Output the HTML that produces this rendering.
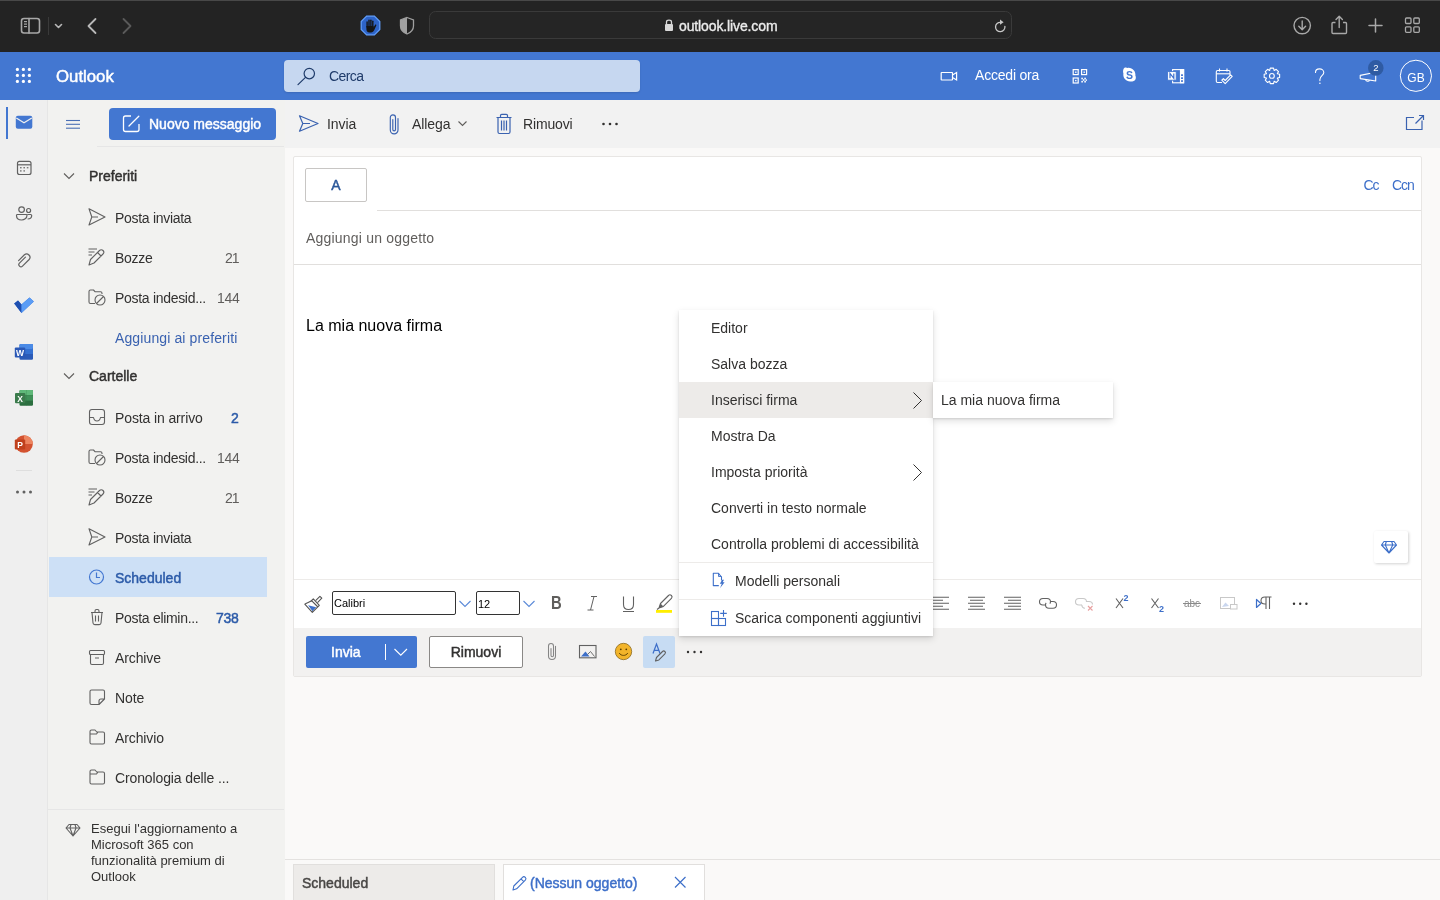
<!DOCTYPE html>
<html><head><meta charset="utf-8">
<style>
*{box-sizing:border-box;margin:0;padding:0}
html,body{width:1440px;height:900px;overflow:hidden;will-change:transform;background:#faf9f8;font-family:"Liberation Sans",sans-serif;color:#323130}
.a{position:absolute}
.sb{-webkit-text-stroke:0.45px currentColor}
svg{position:absolute;overflow:visible}
.t{position:absolute;white-space:nowrap;font-size:14px;line-height:16px}
#safari{left:0;top:0;width:1440px;height:52px;background:#232323;border-top:1px solid #484848}
#hdr{left:0;top:52px;width:1440px;height:48px;background:#4377d1}
#rail{left:0;top:100px;width:48px;height:800px;background:#efefef;border-right:1px solid #e6e6e6}
#pane{left:48px;top:100px;width:237px;height:800px;background:#f2f2f0}
#cmd{left:285px;top:100px;width:1155px;height:48px;background:#f2f2f2}
.fi{position:absolute;left:88px;font-size:14px;line-height:16px;color:#323130;white-space:nowrap}
.cnt{position:absolute;right:46px;font-size:14px;color:#605e5c}
.mi{position:absolute;left:0;width:254px;height:36px}
.mi span{position:absolute;left:32px;top:10px;font-size:14px;line-height:16px;color:#323130;white-space:nowrap}
</style></head><body>
<!-- Safari toolbar -->
<div id="safari" class="a"></div>
<svg style="left:0;top:0" width="1440" height="52">
 <g fill="none" stroke="#a8a8a8" stroke-width="1.6" stroke-linecap="round" stroke-linejoin="round">
  <rect x="21.5" y="18.5" width="18" height="14.5" rx="2.5"/>
  <line x1="29" y1="18.5" x2="29" y2="33"/>
 </g>
 <g fill="#a8a8a8"><rect x="24" y="21" width="3" height="1.2"/><rect x="24" y="23.5" width="3" height="1.2"/><rect x="24" y="26" width="3" height="1.2"/></g>
 <line x1="48.5" y1="17" x2="48.5" y2="35" stroke="#3a3a3a" stroke-width="1"/>
 <path d="M55.5 24.5 L58.5 27.5 L61.5 24.5" fill="none" stroke="#b8b8b8" stroke-width="1.6" stroke-linecap="round" stroke-linejoin="round"/>
 <path d="M95.5 19 L88.5 26 L95.5 33" fill="none" stroke="#b8b8b8" stroke-width="1.8" stroke-linecap="round" stroke-linejoin="round"/>
 <path d="M123.5 19 L130.5 26 L123.5 33" fill="none" stroke="#5a5a5a" stroke-width="1.8" stroke-linecap="round" stroke-linejoin="round"/>
 <!-- adblock octagon -->
 <polygon points="366.6,16.2 374.4,16.2 379.8,21.6 379.8,29.4 374.4,34.8 366.6,34.8 361.2,29.4 361.2,21.6" fill="#2e64c8" stroke="#62a0ff" stroke-width="1.2"/>
 <g fill="#151515">
  <rect x="366.4" y="21.2" width="1.4" height="6.5" rx="0.7"/>
  <rect x="368.3" y="19.4" width="1.4" height="8" rx="0.7"/>
  <rect x="370.2" y="19.6" width="1.4" height="8" rx="0.7"/>
  <rect x="372.1" y="20.6" width="1.4" height="7" rx="0.7"/>
  <path d="M366.4 26 L373.5 26 L373.5 27.5 L375 25 C375.4 24.3 376.6 24.6 376.3 25.5 L374.3 30 C373.6 31.6 372.5 32.4 371 32.4 L369.2 32.4 C367.5 32.4 366.4 31 366.4 29.2 Z"/>
 </g>
 <!-- shield -->
 <path d="M407 17.5 L413.5 20 L413.5 26 C413.5 30 410.5 32.5 407 34 C403.5 32.5 400.5 30 400.5 26 L400.5 20 Z" fill="none" stroke="#a0a0a0" stroke-width="1.3"/>
 <path d="M407 17.5 L400.5 20 L400.5 26 C400.5 30 403.5 32.5 407 34 Z" fill="#a0a0a0"/>
 <!-- url box -->
 <rect x="429.5" y="11.5" width="582" height="27" rx="6" fill="#252525" stroke="#3a3a3a" stroke-width="1"/>
 <rect x="665" y="24" width="8" height="7" rx="1" fill="#d8d8d8"/>
 <path d="M666.5 24 L666.5 22 C666.5 19.6 671.5 19.6 671.5 22 L671.5 24" fill="none" stroke="#d8d8d8" stroke-width="1.3"/>
 <path d="M1000.6 22.3 A4.7 4.7 0 1 0 1004.9 26.3" fill="none" stroke="#c8c8c8" stroke-width="1.3" stroke-linecap="round"/>
 <path d="M1000 19.6 L1003.6 22.2 L1000 24.8 Z" fill="#c8c8c8"/>
 <!-- right icons -->
 <circle cx="1302.2" cy="25.6" r="8.2" fill="none" stroke="#a8a8a8" stroke-width="1.4"/>
 <path d="M1302.2 21 L1302.2 29.5 M1298.8 26.3 L1302.2 29.7 L1305.6 26.3" fill="none" stroke="#a8a8a8" stroke-width="1.4" stroke-linecap="round" stroke-linejoin="round"/>
 <path d="M1335.5 22.5 L1333 22.5 C1332.5 22.5 1332 23 1332 23.5 L1332 32.5 C1332 33 1332.5 33.5 1333 33.5 L1345.5 33.5 C1346 33.5 1346.5 33 1346.5 32.5 L1346.5 23.5 C1346.5 23 1346 22.5 1345.5 22.5 L1343 22.5" fill="none" stroke="#a8a8a8" stroke-width="1.4"/>
 <path d="M1339.2 27.5 L1339.2 16.5 M1336 19.5 L1339.2 16.2 L1342.4 19.5" fill="none" stroke="#a8a8a8" stroke-width="1.4" stroke-linecap="round" stroke-linejoin="round"/>
 <path d="M1375.5 19 L1375.5 32 M1369 25.5 L1382 25.5" stroke="#a8a8a8" stroke-width="1.5" stroke-linecap="round"/>
 <g fill="none" stroke="#a8a8a8" stroke-width="1.3"><rect x="1405.5" y="18" width="5.5" height="5.5" rx="1"/><rect x="1413.8" y="18" width="5.5" height="5.5" rx="1"/><rect x="1405.5" y="26.8" width="5.5" height="5.5" rx="1"/><rect x="1413.8" y="26.8" width="5.5" height="5.5" rx="1"/></g>
</svg>
<div class="t" style="left:679px;top:18px;font-size:14px;color:#ececec;letter-spacing:-0.12px;-webkit-text-stroke:0.35px #ececec">outlook.live.com</div>
<div id="hdr" class="a"></div>
<svg style="left:0;top:52px" width="1440" height="48">
 <g fill="#fff">
  <circle cx="17.4" cy="17.4" r="1.6"/><circle cx="23.4" cy="17.4" r="1.6"/><circle cx="29.4" cy="17.4" r="1.6"/>
  <circle cx="17.4" cy="23.4" r="1.6"/><circle cx="23.4" cy="23.4" r="1.6"/><circle cx="29.4" cy="23.4" r="1.6"/>
  <circle cx="17.4" cy="29.4" r="1.6"/><circle cx="23.4" cy="29.4" r="1.6"/><circle cx="29.4" cy="29.4" r="1.6"/>
 </g>
</svg>
<div class="t sb" style="left:56px;top:68px;font-size:16.8px;line-height:18px;color:#fff">Outlook</div>
<div class="a" style="left:284px;top:60px;width:356px;height:32px;background:#c6d7f0;border-radius:4px;box-shadow:0 1px 2px rgba(0,0,0,0.12)"></div>
<svg style="left:0;top:52px" width="1440" height="48">
 <circle cx="309.3" cy="21.6" r="5.2" fill="none" stroke="#1f3b6a" stroke-width="1.2"/>
 <line x1="305.5" y1="25.4" x2="298" y2="32.6" stroke="#1f3b6a" stroke-width="1.2" stroke-linecap="round"/>
 <!-- video -->
 <g fill="none" stroke="#fff" stroke-width="1.2">
  <rect x="941.2" y="20.5" width="11.3" height="7.5" rx="0.5"/>
  <path d="M952.5 23 L956.6 20.6 L956.6 27.9 L952.5 25.5"/>
 </g>
 <!-- qr -->
 <g fill="none" stroke="#fff" stroke-width="1.2">
  <rect x="1073.2" y="17.6" width="5" height="5"/><rect x="1081.6" y="17.6" width="5" height="5"/><rect x="1073.2" y="26" width="5" height="5"/>
 </g>
 <g fill="#fff"><rect x="1075.1" y="19.5" width="1.4" height="1.4"/><rect x="1083.5" y="19.5" width="1.4" height="1.4"/><rect x="1075.1" y="27.9" width="1.4" height="1.4"/>
  <rect x="1081.3" y="25.7" width="1.6" height="1.6"/><rect x="1084.3" y="25.7" width="1.6" height="1.6"/><rect x="1082.8" y="27.2" width="1.6" height="1.6"/><rect x="1085.6" y="27.4" width="1.4" height="1.4"/><rect x="1081.3" y="28.9" width="1.6" height="1.6"/><rect x="1084.3" y="28.9" width="1.6" height="1.6"/>
 </g>
 <!-- skype -->
 <path d="M1124.5 15.7 C1125.5 15.2 1126.6 15.3 1127.6 15.9 C1132.2 15.3 1136 19.2 1135.4 23.8 C1136 24.9 1136 26.2 1135.5 27.3 C1134.8 28.9 1133 29.8 1131.3 29.4 C1126.6 30.2 1122.6 26.2 1123.4 21.5 C1122.7 19.6 1123.1 16.6 1124.5 15.7 Z" fill="#fff"/>
 <text x="1129.4" y="26.7" font-family="Liberation Sans" font-weight="bold" font-size="10.5" fill="#4377d1" text-anchor="middle">S</text>
 <!-- onenote -->
 <rect x="1172.6" y="17.6" width="11" height="13.2" fill="none" stroke="#fff" stroke-width="1.1"/>
 <rect x="1179.9" y="17.1" width="4.3" height="14.2" fill="#fff"/>
 <g fill="#3a6fd0"><rect x="1181.1" y="22.3" width="1.8" height="1.7"/><rect x="1181.1" y="25.3" width="1.8" height="1.7"/><rect x="1181.1" y="28.2" width="1.8" height="1.7"/></g>
 <rect x="1167.6" y="19.6" width="8.6" height="8.6" fill="#fff" stroke="#4377d1" stroke-width="0.9"/>
 <path d="M1170 26.3 L1170 21.4 L1173.8 26.3 L1173.8 21.4" fill="none" stroke="#3a6fd0" stroke-width="1.2"/>
 <!-- calendar check -->
 <g fill="none" stroke="#fff" stroke-width="1.1" stroke-linejoin="round">
  <path d="M1222 30.5 L1217.5 30.5 C1216.8 30.5 1216.3 30 1216.3 29.3 L1216.3 19.7 C1216.3 19 1216.8 18.5 1217.5 18.5 L1228.8 18.5 C1229.5 18.5 1230 19 1230 19.7 L1230 23"/>
  <line x1="1216.3" y1="21.8" x2="1230" y2="21.8"/>
  <line x1="1219.5" y1="16.5" x2="1219.5" y2="19.5"/><line x1="1227" y1="16.5" x2="1227" y2="19.5"/>
 </g>
 <path d="M1221.8 28.2 L1225.2 31.6 L1232.2 24.4 L1230.6 22.9 L1225.2 28.5 L1223.4 26.6 Z" fill="none" stroke="#fff" stroke-width="1.1" stroke-linejoin="round"/>
 <!-- gear -->
 <g transform="translate(1271.9,23.9)">
  <path d="M5.47 -2.21 L7.73 -1.64 L7.73 1.64 L5.47 2.21 L5.43 2.31 L6.63 4.30 L4.30 6.63 L2.31 5.43 L2.21 5.47 L1.64 7.73 L-1.64 7.73 L-2.21 5.47 L-2.31 5.43 L-4.30 6.63 L-6.63 4.30 L-5.43 2.31 L-5.47 2.21 L-7.73 1.64 L-7.73 -1.64 L-5.47 -2.21 L-5.43 -2.31 L-6.63 -4.30 L-4.30 -6.63 L-2.31 -5.43 L-2.21 -5.47 L-1.64 -7.73 L1.64 -7.73 L2.21 -5.47 L2.31 -5.43 L4.30 -6.63 L6.63 -4.30 L5.43 -2.31 Z" fill="none" stroke="#fff" stroke-width="1.1" stroke-linejoin="round"/>
  <circle r="2.4" fill="none" stroke="#fff" stroke-width="1.1"/>
 </g>
 <!-- help -->
 <path d="M1315.5 20.5 C1315.5 17.8 1317.4 16.9 1319.5 16.9 C1321.8 16.9 1323.8 18.4 1323.8 20.6 C1323.8 23.5 1319.9 24 1319.9 27.4 L1319.9 28.6" fill="none" stroke="#fff" stroke-width="1.1" stroke-linecap="round"/>
 <circle cx="1319.9" cy="31.3" r="0.8" fill="#fff"/>
 <!-- megaphone -->
 <g fill="none" stroke="#fff" stroke-width="1.1" stroke-linejoin="round">
  <path d="M1360.2 23.4 L1375.7 20.3 L1375.7 29 L1360.2 26.6 Z"/>
  <path d="M1365.6 27.5 C1365.6 29.6 1369 29.9 1369.5 28.2"/>
 </g>
 <circle cx="1375.8" cy="15.9" r="7.8" fill="#2f5ba3"/>
 <text x="1375.8" y="19.3" font-family="Liberation Sans" font-size="9.5" fill="#fff" text-anchor="middle">2</text>
 <circle cx="1415.9" cy="23.8" r="15.6" fill="none" stroke="#fff" stroke-width="1"/>
</svg>
<div class="t" style="left:329px;top:68px;color:#1f3b6a;letter-spacing:-0.6px">Cerca</div>
<div class="t" style="left:975px;top:67px;color:#fff;letter-spacing:-0.2px">Accedi ora</div>
<div class="t" style="left:1400px;top:71px;width:32px;text-align:center;color:#fff;font-size:12px;line-height:14px;letter-spacing:0px">GB</div>
<div id="rail" class="a"></div>
<svg style="left:0;top:100px" width="48" height="800">
 <rect x="6" y="7" width="2" height="32" fill="#4377d1"/>
 <!-- mail filled -->
 <rect x="15.8" y="15.8" width="16.5" height="13" rx="2" fill="#4377d1"/>
 <path d="M16.3 18 L24 22.8 L31.8 18" fill="none" stroke="#efefef" stroke-width="1.2"/>
 <!-- calendar -->
 <g fill="none" stroke="#616161" stroke-width="1.2"><rect x="17.5" y="61.3" width="13.5" height="13.2" rx="2"/><line x1="17.5" y1="64.8" x2="31" y2="64.8"/></g>
 <g fill="#7a7a7a"><rect x="20" y="67" width="1.6" height="1.4"/><rect x="23.4" y="67" width="1.6" height="1.4"/><rect x="26.8" y="67" width="1.6" height="1.4"/><rect x="20" y="70.2" width="1.6" height="1.4"/><rect x="23.4" y="70.2" width="1.6" height="1.4"/></g>
 <!-- people -->
 <g fill="none" stroke="#616161" stroke-width="1.2">
  <circle cx="21.6" cy="109.6" r="2.8"/><circle cx="28.6" cy="110.5" r="2"/>
  <path d="M17 114.5 L26.3 114.5 C26.8 114.5 27 114.8 27 115.3 C27 118.5 24 120 21.7 120 C19 120 16.5 118.5 16.5 115.5 C16.5 114.9 16.7 114.5 17 114.5 Z"/>
  <path d="M27.3 114.5 L30.6 114.5 C31.3 114.5 31.7 114.9 31.7 115.5 C31.7 117.8 29.8 119 27.6 119"/>
 </g>
 <!-- clip -->
 <path d="M18.60 160.57 L24.40 154.77 A3.36 3.36 0 0 1 29.13 159.51 L22.49 166.15 A2.15 2.15 0 0 1 19.45 163.11 L25.46 157.10" fill="none" stroke="#616161" stroke-width="1.2" stroke-linecap="round"/>
 <!-- todo -->
 <path d="M14.2 203.5 L18 200.5 L21.5 204.5 L29.5 197.5 L33.8 201.5 L21.5 213 Z" fill="#2f6bd6"/>
 <path d="M21.5 213 L14.2 203.5 L18 200.5 L21.5 204.5 Z" fill="#1e4fb0"/>
 <path d="M21.5 204.5 L29.5 197.5 L33.8 201.5 L21.5 213 Z" fill="#5a9cf5"/>
 <!-- word -->
 <rect x="19.5" y="244" width="13.5" height="15.8" rx="1.2" fill="#2b5bb8"/>
 <rect x="19.5" y="244" width="13.5" height="5" rx="1" fill="#4a8ae6"/>
 <rect x="19.5" y="249" width="13.5" height="5" fill="#3571d2"/>
 <rect x="14.8" y="247.5" width="10.4" height="10" rx="1" fill="#2a58b6"/>
 <text x="20" y="256" font-family="Liberation Sans" font-weight="bold" font-size="8.5" fill="#fff" text-anchor="middle">W</text>
 <!-- excel -->
 <rect x="19.5" y="290" width="13.5" height="15.8" rx="1.2" fill="#2b6e3f"/>
 <rect x="19.5" y="290" width="13.5" height="5.3" rx="1" fill="#5fb879"/>
 <rect x="19.5" y="295.3" width="13.5" height="5.3" fill="#3f9058"/>
 <line x1="26.3" y1="290" x2="26.3" y2="305.8" stroke="#2f7a47" stroke-width="0.6" opacity="0.5"/>
 <rect x="15" y="293" width="10.4" height="10.2" rx="1" fill="#3b7b4c"/>
 <text x="20.2" y="301.6" font-family="Liberation Sans" font-weight="bold" font-size="8.5" fill="#fff" text-anchor="middle">X</text>
 <!-- ppt -->
 <circle cx="24" cy="344" r="8.8" fill="#d35230"/>
 <path d="M24 344 L24 335.2 A8.8 8.8 0 0 1 32.8 344 Z" fill="#ed8560"/>
 <rect x="14.8" y="339.5" width="10.4" height="10" rx="1" fill="#c0401c"/>
 <text x="20" y="348" font-family="Liberation Sans" font-weight="bold" font-size="8.5" fill="#fff" text-anchor="middle">P</text>
 <line x1="16" y1="370.5" x2="32" y2="370.5" stroke="#dedede" stroke-width="1"/>
 <g fill="#616161"><circle cx="17.5" cy="392" r="1.5"/><circle cx="24" cy="392" r="1.5"/><circle cx="30.5" cy="392" r="1.5"/></g>
</svg>
<div id="pane" class="a"></div>
<svg style="left:0;top:100px" width="285" height="800">
 <g fill="none" stroke="#4a6fb5" stroke-width="1.1"><line x1="66" y1="20.5" x2="80" y2="20.5"/><line x1="66" y1="24.3" x2="80" y2="24.3"/><line x1="66" y1="28.2" x2="80" y2="28.2"/></g>
 <rect x="109" y="8" width="167" height="32" rx="4" fill="#4377d1"/>
 <path d="M131 16 L125.5 16 C124.3 16 123.5 16.8 123.5 18 L123.5 29.5 C123.5 30.7 124.3 31.5 125.5 31.5 L137 31.5 C138.2 31.5 139 30.7 139 29.5 L139 24" fill="none" stroke="#fff" stroke-width="1.3"/>
 <path d="M129 26 L138.8 16.2" stroke="#fff" stroke-width="1.3" stroke-linecap="round"/>
 <line x1="97" y1="46.5" x2="284" y2="46.5" stroke="#e6e6e6" stroke-width="1"/>
 <!-- chevrons -->
 <path d="M64 73.5 L69 78.5 L74 73.5" fill="none" stroke="#605e5c" stroke-width="1.1"/>
 <path d="M64 273.5 L69 278.5 L74 273.5" fill="none" stroke="#605e5c" stroke-width="1.1"/>
 <!-- selected -->
 <rect x="49" y="457" width="218" height="40" fill="#cde0f6"/>
 <line x1="48" y1="709.5" x2="284" y2="709.5" stroke="#e6e6e6" stroke-width="1"/>
</svg>
<svg style="left:0;top:0" width="285" height="900" id="ficons">
 <g fill="none" stroke="#616161" stroke-width="1.1" stroke-linejoin="round">
  <!-- send fav -->
  <path d="M89 208.8 L105 217 L89 225 L91.8 217 Z M91.8 217 L98 217"/>
  <!-- drafts fav -->
  <path d="M89 265 L90.5 259.5 L99.5 250.5 C100.5 249.5 102 249.5 103 250.5 C104 251.5 104 253 103 254 L94 263 Z M97.5 252.5 L101 256"/>
  <path d="M88.5 249 L97 249 M88.5 252 L94.5 252 M88.5 255 L92 255"/>
  <!-- junk fav -->
  <path d="M95 303.5 L90.5 303.5 C89.6 303.5 89 302.9 89 302 L89 291.5 C89 290.6 89.6 290 90.5 290 L93.5 290 L95.2 291.8 L100.5 291.8 C101.4 291.8 102 292.4 102 293.3 L102 294"/>
  <circle cx="100" cy="300" r="5"/><path d="M96.5 303.5 L103.5 296.5"/>
  <!-- inbox -->
  <rect x="89.5" y="409.5" width="15" height="15" rx="2.5"/><path d="M89.5 417.5 L93.5 417.5 C94 420 96 421 97 421 C98 421 100 420 100.5 417.5 L104.5 417.5"/>
  <!-- junk -->
  <path d="M95 463.5 L90.5 463.5 C89.6 463.5 89 462.9 89 462 L89 451.5 C89 450.6 89.6 450 90.5 450 L93.5 450 L95.2 451.8 L100.5 451.8 C101.4 451.8 102 452.4 102 453.3 L102 454"/>
  <circle cx="100" cy="460" r="5"/><path d="M96.5 463.5 L103.5 456.5"/>
  <!-- drafts -->
  <path d="M89 505 L90.5 499.5 L99.5 490.5 C100.5 489.5 102 489.5 103 490.5 C104 491.5 104 493 103 494 L94 503 Z M97.5 492.5 L101 496"/>
  <path d="M88.5 489 L97 489 M88.5 492 L94.5 492 M88.5 495 L92 495"/>
  <!-- sent -->
  <path d="M89 528.8 L105 537 L89 545 L91.8 537 Z M91.8 537 L98 537"/>
  <!-- deleted -->
  <path d="M91 612.5 L103 612.5 M95 612.5 L95 611 C95 610 95.8 609.5 96.5 609.5 L97.5 609.5 C98.2 609.5 99 610 99 611 L99 612.5 M92 612.5 L93 623 C93.1 624 93.8 624.6 94.8 624.6 L99.2 624.6 C100.2 624.6 100.9 624 101 623 L102 612.5 M95.5 615.5 L95.5 621.5 M98.5 615.5 L98.5 621.5"/>
  <!-- archive -->
  <rect x="89.5" y="650.5" width="15" height="4" rx="1"/><path d="M90.5 654.5 L90.5 663 C90.5 664 91 664.5 92 664.5 L102 664.5 C103 664.5 103.5 664 103.5 663 L103.5 654.5 M95 658 L99 658"/>
  <!-- note -->
  <path d="M104.5 699 L104.5 691.5 C104.5 690.5 104 690 103 690 L91.5 690 C90.5 690 90 690.5 90 691.5 L90 703 C90 704 90.5 704.5 91.5 704.5 L99 704.5 Z M99 704.5 L99 701 C99 699.8 99.8 699 101 699 L104.5 699"/>
  <!-- folders -->
  <path d="M90 731.5 C90 730.6 90.6 730 91.5 730 L95 730 L96.8 732 L103 732 C103.9 732 104.5 732.6 104.5 733.5 L104.5 742.5 C104.5 743.4 103.9 744 103 744 L91.5 744 C90.6 744 90 743.4 90 742.5 Z M90 734 L96.5 734 L98 732"/>
  <path d="M90 771.5 C90 770.6 90.6 770 91.5 770 L95 770 L96.8 772 L103 772 C103.9 772 104.5 772.6 104.5 773.5 L104.5 782.5 C104.5 783.4 103.9 784 103 784 L91.5 784 C90.6 784 90 783.4 90 782.5 Z M90 774 L96.5 774 L98 772"/>
  <!-- diamond -->
  <path d="M69 824.5 L77 824.5 L80 828 L73 836 L66 828 Z M66 828 L80 828 M71 824.5 L70 828 L73 836 L76 828 L75 824.5"/>
 </g>
 <g fill="none" stroke="#4377d1" stroke-width="1.2">
  <circle cx="96.5" cy="577" r="7"/><path d="M96.5 572.5 L96.5 577.5 L100 577.5"/>
 </g>
</svg>
<div class="t sb" style="left:149px;top:116px;color:#fff;font-size:14px">Nuovo messaggio</div>
<div class="t sb" style="left:89px;top:168px;color:#323130">Preferiti</div>
<div class="t sb" style="left:89px;top:368px;color:#323130">Cartelle</div>
<div class="fi" style="left:115px;top:210px;letter-spacing:-0.3px">Posta inviata</div>
<div class="fi" style="left:115px;top:250px;letter-spacing:-0.3px">Bozze</div>
<div class="t" style="left:225px;top:250px;color:#605e5c;letter-spacing:-1px">21</div>
<div class="fi" style="left:115px;top:290px;letter-spacing:-0.3px">Posta indesid...</div>
<div class="t" style="left:217px;top:290px;color:#605e5c;letter-spacing:-0.3px">144</div>
<div class="fi" style="left:115px;top:330px;color:#3a62b0;letter-spacing:0.12px">Aggiungi ai preferiti</div>
<div class="fi" style="left:115px;top:410px;letter-spacing:-0.12px">Posta in arrivo</div>
<div class="t sb" style="left:231px;top:410px;color:#2b5aa8">2</div>
<div class="fi" style="left:115px;top:450px;letter-spacing:-0.3px">Posta indesid...</div>
<div class="t" style="left:217px;top:450px;color:#605e5c;letter-spacing:-0.3px">144</div>
<div class="fi" style="left:115px;top:490px;letter-spacing:-0.3px">Bozze</div>
<div class="t" style="left:225px;top:490px;color:#605e5c;letter-spacing:-1px">21</div>
<div class="fi" style="left:115px;top:530px;letter-spacing:-0.3px">Posta inviata</div>
<div class="fi sb" style="left:115px;top:570px;color:#2b5aa8">Scheduled</div>
<div class="fi" style="left:115px;top:610px;letter-spacing:-0.3px">Posta elimin...</div>
<div class="t sb" style="left:216px;top:610px;color:#2b5aa8;letter-spacing:-0.3px">738</div>
<div class="fi" style="left:115px;top:650px;letter-spacing:-0.12px">Archive</div>
<div class="fi" style="left:115px;top:690px;letter-spacing:-0.12px">Note</div>
<div class="fi" style="left:115px;top:730px;letter-spacing:-0.12px">Archivio</div>
<div class="fi" style="left:115px;top:770px;letter-spacing:-0.12px">Cronologia delle ...</div>
<div class="a" style="left:91px;top:821px;font-size:13px;line-height:16px;color:#323130;white-space:nowrap">Esegui l'aggiornamento a<br>Microsoft 365 con<br>funzionalità premium di<br>Outlook</div>
<div id="cmd" class="a"></div>
<svg style="left:0;top:100px" width="1440" height="48">
 <path d="M299.5 15.8 L318 23.5 L299.5 31.2 L302.8 23.5 Z M302.8 23.5 L310 23.5" fill="none" stroke="#3a62b0" stroke-width="1.2" stroke-linejoin="round"/>
 <path d="M398 18.5 L398 30 A3.85 3.85 0 0 1 390.3 30 L390.3 17.5 A2.6 2.6 0 0 1 395.5 17.5 L395.5 29.5 A1.35 1.35 0 0 1 392.8 29.5 L392.8 19.5" fill="none" stroke="#3a62b0" stroke-width="1.15" stroke-linecap="round"/>
 <path d="M458.5 21.5 L462.5 25.5 L466.5 21.5" fill="none" stroke="#605e5c" stroke-width="1.1"/>
 <path d="M496.5 17.5 L511.5 17.5 M500.5 17.5 L500.5 15.5 C500.5 14.8 501 14.3 501.7 14.3 L506.3 14.3 C507 14.3 507.5 14.8 507.5 15.5 L507.5 17.5 M498 17.5 L498 32 C498 33 498.5 33.5 499.5 33.5 L508.5 33.5 C509.5 33.5 510 33 510 32 L510 17.5 M501.5 20.5 L501.5 30.5 M504 20.5 L504 30.5 M506.5 20.5 L506.5 30.5" fill="none" stroke="#3a62b0" stroke-width="1.2"/>
 <g fill="#323130"><circle cx="603.5" cy="24" r="1.3"/><circle cx="610" cy="24" r="1.3"/><circle cx="616.5" cy="24" r="1.3"/></g>
 <!-- popout -->
 <path d="M1422 20.5 L1422 29.5 L1406.5 29.5 L1406.5 17.5 L1414 17.5 M1415.5 23.5 L1423.5 15.5 M1419 15.5 L1423.5 15.5 L1423.5 20" fill="none" stroke="#3a62b0" stroke-width="1.2"/>
</svg>
<div class="t" style="left:327px;top:116px;color:#323130;letter-spacing:-0.1px">Invia</div>
<div class="t" style="left:412px;top:116px;color:#323130;letter-spacing:-0.1px">Allega</div>
<div class="t" style="left:523px;top:116px;color:#323130;letter-spacing:-0.15px">Rimuovi</div>
<!-- compose card -->
<div class="a" style="left:293px;top:156px;width:1129px;height:521px;background:#fff;border:1px solid #e8e6e4;border-radius:2px"></div>
<div class="a" style="left:305px;top:168px;width:62px;height:34px;border:1px solid #c8c6c4;border-radius:2px"></div>
<div class="t sb" style="left:305px;top:177px;width:62px;text-align:center;color:#2b579a;font-size:14px">A</div>
<div class="a" style="left:377px;top:210px;width:1044px;height:1px;background:#e1dfdd"></div>
<div class="t" style="left:1363.5px;top:177px;color:#3d6fc9;font-size:14px;letter-spacing:-1.2px">Cc</div>
<div class="t" style="left:1392px;top:177px;color:#3d6fc9;font-size:14px;letter-spacing:-1.1px">Ccn</div>
<div class="t" style="left:306px;top:230px;color:#605e5c;font-size:14px;letter-spacing:0.2px">Aggiungi un oggetto</div>
<div class="a" style="left:294px;top:264px;width:1127px;height:1px;background:#e1dfdd"></div>
<div class="t" style="left:306px;top:317px;color:#000;font-size:16px;line-height:18px">La mia nuova firma</div>
<div class="a" style="left:1374px;top:531px;width:34px;height:32px;background:#fff;border-radius:2px;box-shadow:1px 1px 3px rgba(0,0,0,0.18)"></div>
<svg style="left:0;top:0" width="1440" height="900">
 <path d="M1384 541.5 L1394 541.5 L1396.5 545 L1389 553 L1381.5 545 Z M1381.5 545 L1396.5 545 M1386.3 541.5 L1385.3 545 L1389 553 L1392.7 545 L1391.7 541.5" fill="none" stroke="#3d6fc9" stroke-width="1.1" stroke-linejoin="round"/>
</svg>
<div class="a" style="left:294px;top:579px;width:1127px;height:1px;background:#edebe9"></div>
<div class="a" style="left:294px;top:628px;width:1127px;height:48px;background:#f2f1f0"></div>
<!-- format toolbar -->
<div class="a" style="left:332px;top:591px;width:124px;height:24px;border:1.3px solid #333;border-radius:2px;background:#fff"></div>
<div class="t" style="left:334px;top:597px;font-size:11px;line-height:13px;color:#000">Calibri</div>
<div class="a" style="left:476px;top:591px;width:44px;height:24px;border:1.3px solid #333;border-radius:2px;background:#fff"></div>
<div class="t" style="left:478px;top:598px;font-size:11px;line-height:13px;color:#000">12</div>
<div class="t" style="left:550.5px;top:593px;font-size:19px;line-height:20px;color:#5f5e5c;font-weight:bold;transform:scaleX(0.78);transform-origin:0 0">B</div>
<svg style="left:0;top:0" width="1440" height="900">
 <!-- format painter -->
 <path d="M308.1 605.3 L316.2 607.3 L312.5 611.2 Z" fill="#3d6fc9"/>
 <path d="M304.8 604.2 C307.5 602.6 310.6 601.9 312.6 599.6 L313.3 598.8 L319.3 605.3 L312.3 612.4 Z M311.6 600.6 L317.9 607" fill="none" stroke="#555" stroke-width="1.1" stroke-linejoin="round"/>
 <path d="M315.6 600.6 L319.9 596.3 L321.8 598.2 L317.5 602.6" fill="none" stroke="#555" stroke-width="1.1" stroke-linejoin="round"/>
 <path d="M459.5 601 L465 606.5 L470.5 601" fill="none" stroke="#5b8ad8" stroke-width="1.1"/>
 <path d="M523.5 601 L529 606.5 L534.5 601" fill="none" stroke="#5b8ad8" stroke-width="1.1"/>
 <!-- italic -->
 <path d="M591 596.5 L597 596.5 M587.5 610 L593.5 610 M594 596.5 L590.5 610" fill="none" stroke="#616161" stroke-width="1"/>
 <!-- underline -->
 <path d="M623.5 596.5 L623.5 604.5 C623.5 608.5 626 609.5 628.5 609.5 C631 609.5 633.5 608.5 633.5 604.5 L633.5 596.5 M623 611.5 L634 611.5" fill="none" stroke="#616161" stroke-width="1.1"/>
 <!-- highlighter -->
 <path d="M659 608 L660.5 603.5 L668.5 595.5 C669.3 594.7 670.6 594.7 671.4 595.5 C672.2 596.3 672.2 597.6 671.4 598.4 L663.4 606.4 Z M659 608 L657 609.5" fill="none" stroke="#616161" stroke-width="1.1" stroke-linejoin="round"/>
 <path d="M659 608 L660.5 603.5 L663.4 606.4 Z" fill="#616161"/>
 <rect x="656" y="610" width="16" height="2.8" fill="#ffee00"/>
 <!-- align left -->
 <g stroke="#616161" stroke-width="1.1">
  <path d="M933 597.3 L949 597.3 M933 600.3 L943 600.3 M933 603.3 L949 603.3 M933 606.3 L943 606.3 M933 609.3 L949 609.3"/>
  <path d="M968 597.3 L985 597.3 M970 600.3 L983 600.3 M968 603.3 L985 603.3 M970 606.3 L983 606.3 M968 609.3 L985 609.3"/>
  <path d="M1004 597.3 L1021 597.3 M1008 600.3 L1021 600.3 M1004 603.3 L1021 603.3 M1008 606.3 L1021 606.3 M1004 609.3 L1021 609.3"/>
 </g>
 <!-- link -->
 <g fill="none" stroke="#616161" stroke-width="1.1">
  <path d="M1046 605 L1043 605 C1040.5 605 1039.5 603.5 1039.5 601.8 C1039.5 600 1040.8 598.5 1043 598.5 L1047 598.5 C1049.3 598.5 1050.5 600 1050.5 601.8 C1050.5 602.5 1050.2 603.2 1049.8 603.6"/>
  <path d="M1050 601.5 L1053 601.5 C1055.5 601.5 1056.5 603 1056.5 604.8 C1056.5 606.6 1055.2 608.2 1053 608.2 L1049 608.2 C1046.7 608.2 1045.5 606.6 1045.5 604.8 C1045.5 604.1 1045.8 603.4 1046.2 603"/>
 </g>
 <g fill="none" stroke="#c8c8c8" stroke-width="1.1">
  <path d="M1082 605 L1079 605 C1076.5 605 1075.5 603.5 1075.5 601.8 C1075.5 600 1076.8 598.5 1079 598.5 L1083 598.5 C1085.3 598.5 1086.5 600 1086.5 601.8"/>
  <path d="M1086 601.5 L1089 601.5 C1091.5 601.5 1092.5 603 1092.5 604.5 M1082 604.8 C1081.5 606.6 1083 608.2 1085 608.2"/>
 </g>
 <path d="M1088 606 L1092.5 610.5 M1092.5 606 L1088 610.5" stroke="#e8a0a0" stroke-width="1.1"/>
 <!-- super/sub -->
 <path d="M1116 598.5 L1123 608 M1123 598.5 L1116 608" stroke="#616161" stroke-width="1.1"/>
 <path d="M1151.5 598.5 L1158.5 608 M1158.5 598.5 L1151.5 608" stroke="#616161" stroke-width="1.1"/>
 <!-- strikethrough abc -->
 <line x1="1183" y1="603.5" x2="1201" y2="603.5" stroke="#8a8a8a" stroke-width="1"/>
 <!-- image size -->
 <g fill="none" stroke="#c8c8c8" stroke-width="1"><rect x="1220.5" y="597.5" width="14" height="11"/><rect x="1230.5" y="604.5" width="6.5" height="4.5" fill="#fff"/></g>
 <path d="M1222 607 L1225.5 602.5 L1229 606" fill="#c9d6ee"/>
 <!-- paragraph -->
 <path d="M1256.5 599.5 L1256.5 607.5 L1260.8 603.5 Z" fill="none" stroke="#3d6fc9" stroke-width="1.2" stroke-linejoin="round"/>
 <path d="M1266 609 L1266 597 M1269.5 609 L1269.5 597 M1271.5 597 L1265 597 C1262 597 1261 599 1261 600.7 C1261 602.5 1262.5 604 1265 604 L1266 604" fill="none" stroke="#616161" stroke-width="1.1"/>
 <g fill="#323130"><circle cx="1294" cy="603.8" r="1.2"/><circle cx="1300.2" cy="603.8" r="1.2"/><circle cx="1306.4" cy="603.8" r="1.2"/></g>
</svg>
<div class="t" style="left:1123.5px;top:593.5px;font-size:9px;line-height:9px;color:#3d6fc9;font-weight:bold">2</div>
<div class="t" style="left:1159px;top:604.5px;font-size:9px;line-height:9px;color:#3d6fc9;font-weight:bold">2</div>
<div class="t" style="left:1184px;top:598px;font-size:10px;line-height:11px;color:#8a8a8a">abc</div>
<!-- action bar -->
<div class="a" style="left:306px;top:636px;width:111px;height:32px;background:#4377d1;border-radius:2px"></div>
<div class="t sb" style="left:331px;top:644px;color:#fff">Invia</div>
<div class="a" style="left:385px;top:644px;width:1px;height:16px;background:#fff"></div>
<div class="a" style="left:429px;top:636px;width:94px;height:32px;background:#fff;border:1px solid #8a8886;border-radius:2px"></div>
<div class="t sb" style="left:429px;top:644px;width:94px;text-align:center;color:#323130">Rimuovi</div>
<div class="a" style="left:643px;top:636px;width:32px;height:32px;background:#c7dcf3;border-radius:2px"></div>
<svg style="left:0;top:0" width="1440" height="900">
 <path d="M394.5 649 L400.8 655.2 L407 649" fill="none" stroke="#fff" stroke-width="1.1"/>
 <!-- clip -->
 <path d="M555.5 646.2 L555.5 656 A3.5 3.5 0 0 1 548.5 656 L548.5 646 A2.5 2.5 0 0 1 553.5 646 L553.5 655.4 A1.25 1.25 0 0 1 551 655.4 L551 648.5" fill="none" stroke="#858585" stroke-width="1.05" stroke-linecap="round"/>
 <!-- image -->
 <rect x="579.5" y="645.5" width="16.5" height="12.3" fill="none" stroke="#616161" stroke-width="1.1"/>
 <path d="M581 656.5 L585.5 651.5 L589.5 656.5 Z" fill="#3d6fc9"/>
 <path d="M587.5 654.5 L590.5 651.5 L594.5 656.5" fill="none" stroke="#616161" stroke-width="0.9"/>
 <!-- emoji -->
 <circle cx="623.5" cy="651.5" r="8.2" fill="#f2b42a" stroke="#8b6a1e" stroke-width="0.8"/>
 <circle cx="620.8" cy="649.3" r="0.9" fill="#5a3d00"/><circle cx="626.3" cy="649.3" r="0.9" fill="#5a3d00"/>
 <path d="M619.2 653 C621 656.2 626 656.2 627.8 653" fill="none" stroke="#5a3d00" stroke-width="0.9"/>
 <!-- editor -->
 <path d="M653 653.5 L656.5 644 L660 653.5 M654.3 650.3 L658.7 650.3" fill="none" stroke="#3d6fc9" stroke-width="1.2"/>
 <path d="M655.5 661 L656.5 657.5 L662.5 651.5 C663.2 650.8 664.2 650.8 664.9 651.5 C665.6 652.2 665.6 653.2 664.9 653.9 L658.9 659.9 Z" fill="none" stroke="#616161" stroke-width="1.1" stroke-linejoin="round"/>
 <g fill="#323130"><circle cx="688" cy="652" r="1.2"/><circle cx="694.5" cy="652" r="1.2"/><circle cx="701" cy="652" r="1.2"/></g>
</svg>
<!-- context menu -->
<div class="a" style="left:679px;top:310px;width:254px;height:326px;background:#fff;box-shadow:0 3.2px 7.2px rgba(0,0,0,0.13),0 0.6px 1.8px rgba(0,0,0,0.11)">
 <div class="mi" style="top:0"><span>Editor</span></div>
 <div class="mi" style="top:36px"><span>Salva bozza</span></div>
 <div class="mi" style="top:72px;background:#edebe9"><span>Inserisci firma</span></div>
 <div class="mi" style="top:108px"><span>Mostra Da</span></div>
 <div class="mi" style="top:144px"><span>Imposta priorità</span></div>
 <div class="mi" style="top:180px"><span>Converti in testo normale</span></div>
 <div class="mi" style="top:216px"><span>Controlla problemi di accessibilità</span></div>
 <div class="a" style="left:0;top:252px;width:254px;height:1px;background:#edebe9"></div>
 <div class="mi" style="top:253px"><span style="left:56px;top:10px">Modelli personali</span></div>
 <div class="a" style="left:0;top:289px;width:254px;height:1px;background:#edebe9"></div>
 <div class="mi" style="top:290px"><span style="left:56px;top:10px">Scarica componenti aggiuntivi</span></div>
</div>
<svg style="left:0;top:0" width="1440" height="900">
 <path d="M913.5 392.5 L921.5 400.5 L913.5 408.5" fill="none" stroke="#323130" stroke-width="1"/>
 <path d="M913.5 464.5 L921.5 472.5 L913.5 480.5" fill="none" stroke="#323130" stroke-width="1"/>
 <!-- modelli icon -->
 <path d="M721.5 580.5 L721.5 577 L718.5 573.3 L713.3 573.3 L713.3 585.6 L718.8 585.6" fill="none" stroke="#3d6fc9" stroke-width="1.1" stroke-linejoin="round"/>
 <path d="M718.5 573.3 L718.5 576.5 L721.5 576.5" fill="none" stroke="#3d6fc9" stroke-width="0.9"/>
 <path d="M722.3 579.8 L719.8 583.8 L721.8 583.8 L720 588.3 L724.6 582.3 L722.6 582.3 L724 579.8 Z" fill="#3d6fc9"/>
 <!-- scarica icon -->
 <g fill="none" stroke="#3d6fc9" stroke-width="1.1"><rect x="711.5" y="611.5" width="7" height="7"/><rect x="711.5" y="618.5" width="7" height="7"/><rect x="718.5" y="618.5" width="7" height="7"/></g>
 <path d="M723.5 610 L723.5 616.7 M720.2 613.35 L726.8 613.35" stroke="#3d6fc9" stroke-width="1.1"/>
</svg>
<div class="a" style="left:933px;top:382px;width:180px;height:36px;background:#fff;box-shadow:0 3.2px 7.2px rgba(0,0,0,0.13),0 0.6px 1.8px rgba(0,0,0,0.11)"></div>
<div class="t" style="left:941px;top:392px;color:#323130">La mia nuova firma</div>
<!-- bottom tabs -->
<div class="a" style="left:285px;top:859px;width:1155px;height:1px;background:#e4e2e0"></div>
<div class="a" style="left:293px;top:864px;width:202px;height:36px;background:#edebe9;border:1px solid #e1dfdd;border-bottom:none"></div>
<div class="t sb" style="left:302px;top:875px;color:#484644">Scheduled</div>
<div class="a" style="left:503px;top:864px;width:202px;height:36px;background:#fff;border:1px solid #e1dfdd;border-bottom:none"></div>
<svg style="left:0;top:0" width="1440" height="900">
 <path d="M513 890 L513.8 886 L522.5 877.3 C523.3 876.5 524.5 876.5 525.3 877.3 C526.1 878.1 526.1 879.3 525.3 880.1 L516.6 888.8 Z M521 878.8 L523.8 881.6" fill="none" stroke="#3d6fc9" stroke-width="1.1" stroke-linejoin="round"/>
 <path d="M675 877 L685.5 887.5 M685.5 877 L675 887.5" stroke="#3d6fc9" stroke-width="1.2"/>
</svg>
<div class="t sb" style="left:530px;top:875px;color:#3d6fc9">(Nessun oggetto)</div>
</body></html>
